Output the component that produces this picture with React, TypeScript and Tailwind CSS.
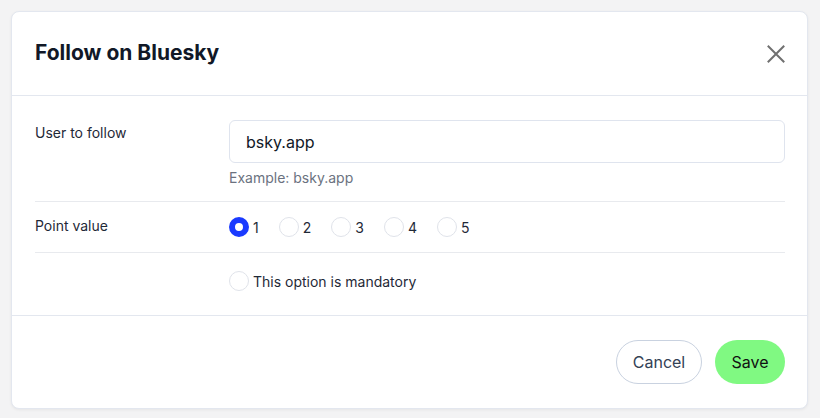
import React from "react";

export default function App() {
  const font = { fontFamily: "Inter, 'Noto Sans', sans-serif" };
  return (
    <div className="w-[820px] h-[418px] bg-[#f3f3f4] pt-[11px] pl-[11px]" style={font}>
      <div className="w-[797px] h-[398px] bg-white rounded-[8px] border border-[#e3e7ef] shadow-[0_1px_3px_rgba(0,0,0,0.06)] flex flex-col">
        <div className="h-[84px] flex items-center justify-between pl-[23px] pr-[20px] border-b border-[#e3e7ef]">
          <h2 className="text-[21px] font-bold text-[#111827] -mt-[2px]">Follow on Bluesky</h2>
          <svg width="22" height="22" viewBox="0 0 22 22" className="text-[#707070]">
            <path d="M3.5 3.5L18.5 18.5M18.5 3.5L3.5 18.5" stroke="currentColor" strokeWidth="2" strokeLinecap="square" />
          </svg>
        </div>
        <div className="pl-[23px] pr-[22px] flex-1 border-b border-[#e3e7ef]">
          <div className="flex pt-6 pb-[13px] border-b border-[#e8eaee]">
            <div className="w-[194px] text-[14px] text-[#1f2937] pt-[2px]">User to follow</div>
            <div className="flex-1">
              <div className="h-[43px] border border-[#dfe4ee] rounded-[6px] flex items-center px-4 text-[16px] text-[#111827]">bsky.app</div>
              <div className="mt-[5px] text-[14px] leading-5 text-[#6b7280]">Example: bsky.app</div>
            </div>
          </div>
          <div className="flex items-center h-[51px] border-b border-[#e8eaee]">
            <div className="w-[194px] text-[14px] text-[#1f2937] -mt-[3px]">Point value</div>
            <div className="flex items-center gap-[20px]">
              {[1, 2, 3, 4, 5].map((n) => (
                <div key={n} className="flex items-center">
                  {n === 1 ? (
                    <span className="w-5 h-5 rounded-full border-[6px] border-[#1a3aff] bg-white box-border" />
                  ) : (
                    <span className="w-5 h-5 rounded-full border border-[#e0e3ea] bg-white box-border" />
                  )}
                  <span className="ml-[4px] text-[14px] text-[#1f2937]">{n}</span>
                </div>
              ))}
            </div>
          </div>
          <div className="flex items-center h-[56px]">
            <div className="w-[194px]" />
            <span className="w-5 h-5 rounded-full border border-[#e0e3ea] bg-white box-border" />
            <span className="ml-[4px] text-[14px] text-[#1f2937]">This option is mandatory</span>
          </div>
        </div>
        <div className="h-[92px] flex items-center justify-end gap-[13px] pr-[22px]">
          <button className="h-[44px] w-[86px] rounded-full border border-[#c9d2e0] text-[16px] text-[#334155] bg-white">Cancel</button>
          <button className="h-[44px] w-[70px] rounded-full bg-[#80f982] text-[16px] text-[#111111]">Save</button>
        </div>
      </div>
    </div>
  );
}
